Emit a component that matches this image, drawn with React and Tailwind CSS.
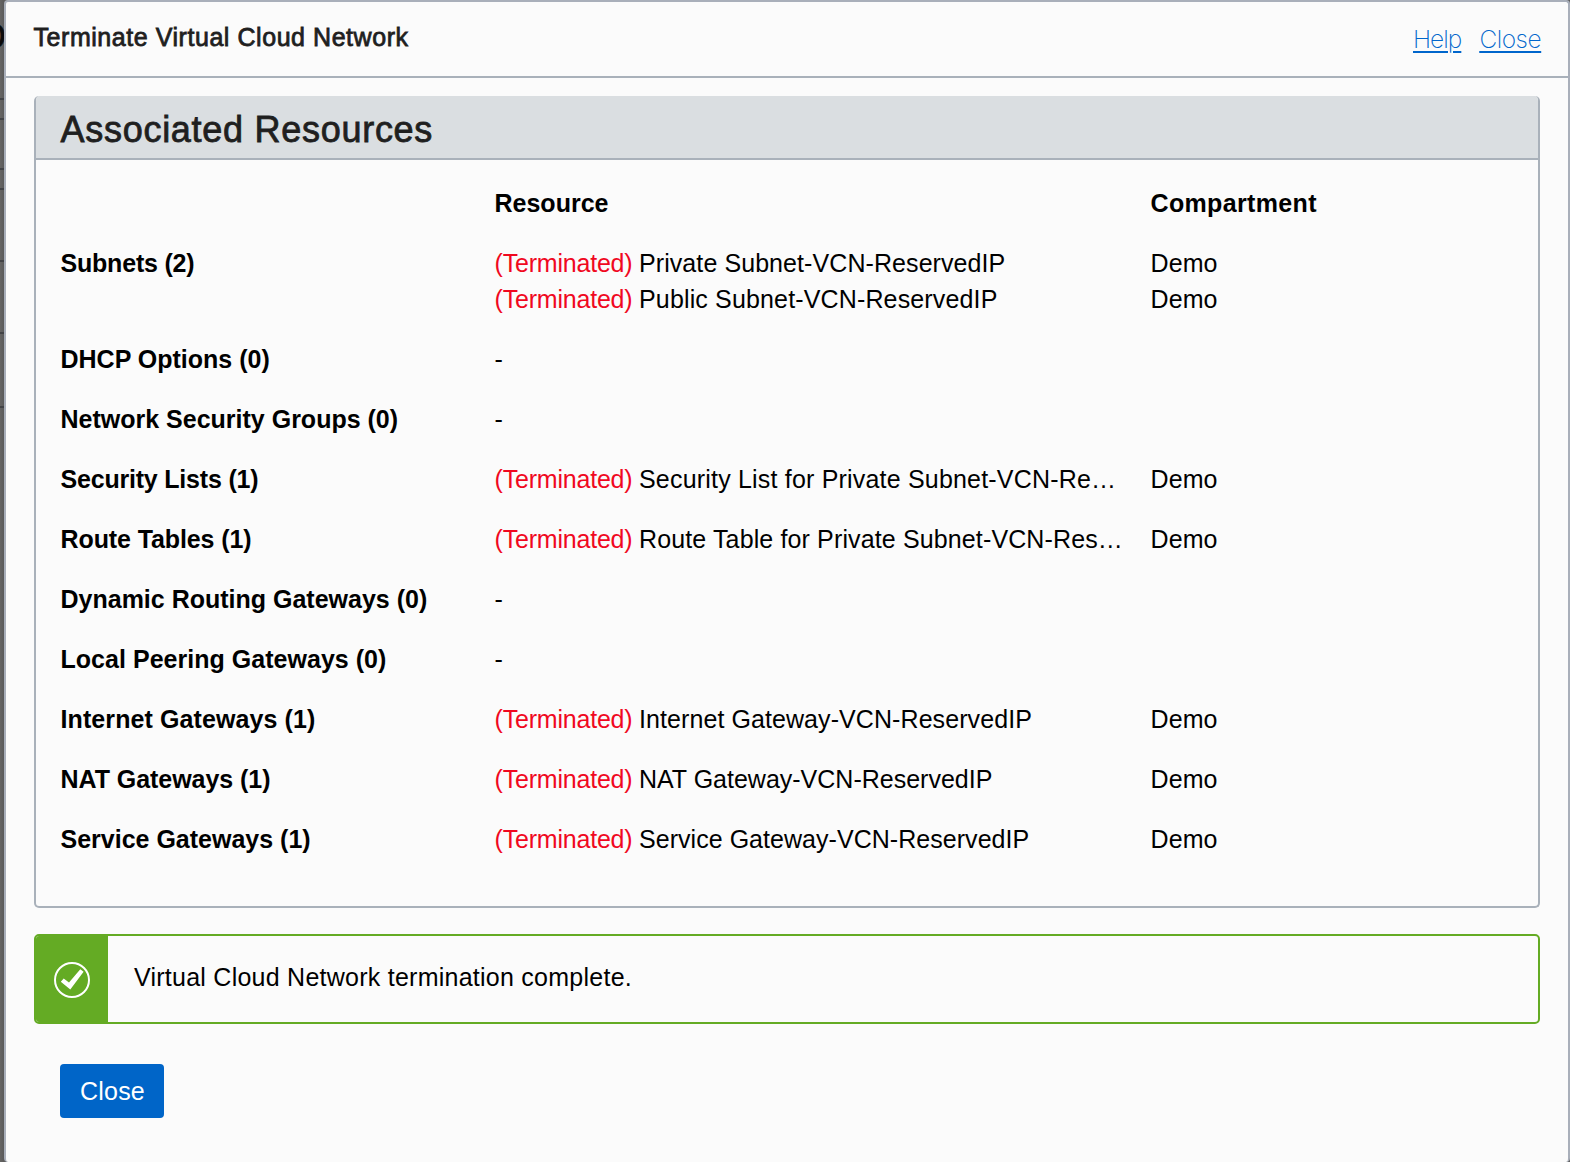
import React from 'react';

const rows = [
  { label: 'Subnets (2)', ls: 'tracking-[-0.2px]', items: [
    { name: 'Private Subnet-VCN-ReservedIP', ls: 'tracking-[0.08px]' },
    { name: 'Public Subnet-VCN-ReservedIP', ls: 'tracking-[0.15px]' },
  ] },
  { label: 'DHCP Options (0)', ls: '', items: [] },
  { label: 'Network Security Groups (0)', ls: '', items: [] },
  { label: 'Security Lists (1)', ls: 'tracking-[-0.2px]', items: [
    { name: 'Security List for Private Subnet-VCN-Re…', ls: 'tracking-[0.19px]' },
  ] },
  { label: 'Route Tables (1)', ls: 'tracking-[-0.1px]', items: [
    { name: 'Route Table for Private Subnet-VCN-Res…', ls: 'tracking-[0.13px]' },
  ] },
  { label: 'Dynamic Routing Gateways (0)', ls: '', items: [] },
  { label: 'Local Peering Gateways (0)', ls: 'tracking-[0.03px]', items: [] },
  { label: 'Internet Gateways (1)', ls: 'tracking-[0.1px]', items: [
    { name: 'Internet Gateway-VCN-ReservedIP', ls: 'tracking-[0.08px]' },
  ] },
  { label: 'NAT Gateways (1)', ls: 'tracking-[-0.05px]', items: [
    { name: 'NAT Gateway-VCN-ReservedIP', ls: '' },
  ] },
  { label: 'Service Gateways (1)', ls: '', items: [
    { name: 'Service Gateway-VCN-ReservedIP', ls: 'tracking-[0.04px]' },
  ] },
];

function Row({ label, ls, items }) {
  return (
    <div className="mb-6 grid grid-cols-[434px_656px_1fr]">
      <div className={`font-bold ${ls}`}>{label}</div>
      <div>
        {items.length === 0 && <div>-</div>}
        {items.map((item) => (
          <div key={item.name} className="flex">
            <span className="w-[144.5px] shrink-0 tracking-[-0.2px] text-[#f0081f]">(Terminated)</span>
            <span className={item.ls}>{item.name}</span>
          </div>
        ))}
      </div>
      <div>
        {items.map((item) => (
          <div key={item.name} className="tracking-[0.1px]">Demo</div>
        ))}
      </div>
    </div>
  );
}

function Backdrop() {
  return (
    <div className="relative w-1 shrink-0 overflow-hidden bg-linear-to-r from-[#666564] to-[#5a5a5a]">
      <span className="absolute top-[14px] right-[-2px] text-[36px] leading-[46px] text-[#0a0a0a] [-webkit-text-stroke:0.6px]">D</span>
      <div className="h-[100px] border-b-2 border-[#424346]" />
      <div className="h-5 border-b-2 border-[#424346]" />
      <div className="h-[50px] border-b-2 border-[#424346]" />
      <div className="h-5 border-b-2 border-[#424346]" />
      <div className="h-[72px] border-b-2 border-[#424346]" />
      <div className="h-[72px] border-b-2 border-[#424346]" />
      <div className="h-[74px] border-b-2 border-[#424346]" />
    </div>
  );
}

export default function App() {
  return (
    <div className="flex h-[1162px] w-[1570px] overflow-hidden bg-[#5f5e5e] font-['Liberation_Sans',Arial,sans-serif] text-[25px] leading-9 text-black">
      <Backdrop />
      <div className="flex flex-1 flex-col rounded-[4px] border-2 border-b-0 border-[#a9afba] bg-[#fbfbfb]">
        <header className="flex h-[76px] shrink-0 justify-between border-b-2 border-[#a9b1ba] pr-[27px] pl-[27.5px]">
          <h1 className="mt-[17px] tracking-[0.55px] text-[#1f1f1f] [-webkit-text-stroke:0.8px]">Terminate Virtual Cloud Network</h1>
          <nav className="mt-[19px] flex gap-[18px] font-['Inter'] text-[24.5px] font-extralight text-[#0066cc] underline decoration-2 underline-offset-[3px]">
            <a className="w-[48.5px] tracking-[-1px]">Help</a>
            <a className="w-[61.5px] tracking-[-0.5px]">Close</a>
          </nav>
        </header>

        <main className="px-7 pt-[18px]">
          <section className="h-[812px] w-[1506px] overflow-hidden rounded-[5px] border-2 border-t-0 border-[#a9b1ba]">
            <h2 className="h-16 border-b-2 border-[#a9b1ba] bg-[#dadee1] pl-[24.5px] text-[36px] leading-[68px] tracking-[0.72px] text-[#1f1f1f] [-webkit-text-stroke:0.8px]">
              Associated Resources
            </h2>
            <div className="pt-[25px] pl-[24.5px]">
              <div className="mb-6 grid grid-cols-[434px_656px_1fr] font-bold">
                <div />
                <div>Resource</div>
                <div className="tracking-[0.35px]">Compartment</div>
              </div>
              {rows.map((row) => (
                <Row key={row.label} {...row} />
              ))}
            </div>
          </section>

          <section className="mt-[26px] flex h-[90px] w-[1506px] overflow-hidden rounded-[5px] border-2 border-[#64ab24]">
            <div className="flex w-[72px] items-center justify-center bg-[#64ab24] pt-[2px]">
              <svg width="36" height="36" viewBox="0 0 36 36" fill="none">
                <circle cx="18" cy="18" r="17" stroke="white" strokeWidth="2" />
                <path d="M6.8 19.7 9.7 16.4 15 20.6 26.3 7.3 29.6 9.7 16.3 27.5Z" fill="white" />
              </svg>
            </div>
            <p className="mt-[23px] pl-[26px] tracking-[0.25px]">Virtual Cloud Network termination complete.</p>
          </section>

          <button className="mt-10 ml-[26px] h-[54px] w-[104px] rounded-[4px] bg-[#0065c8] pl-px tracking-[0.2px] text-white">
            Close
          </button>
        </main>
      </div>
    </div>
  );
}
